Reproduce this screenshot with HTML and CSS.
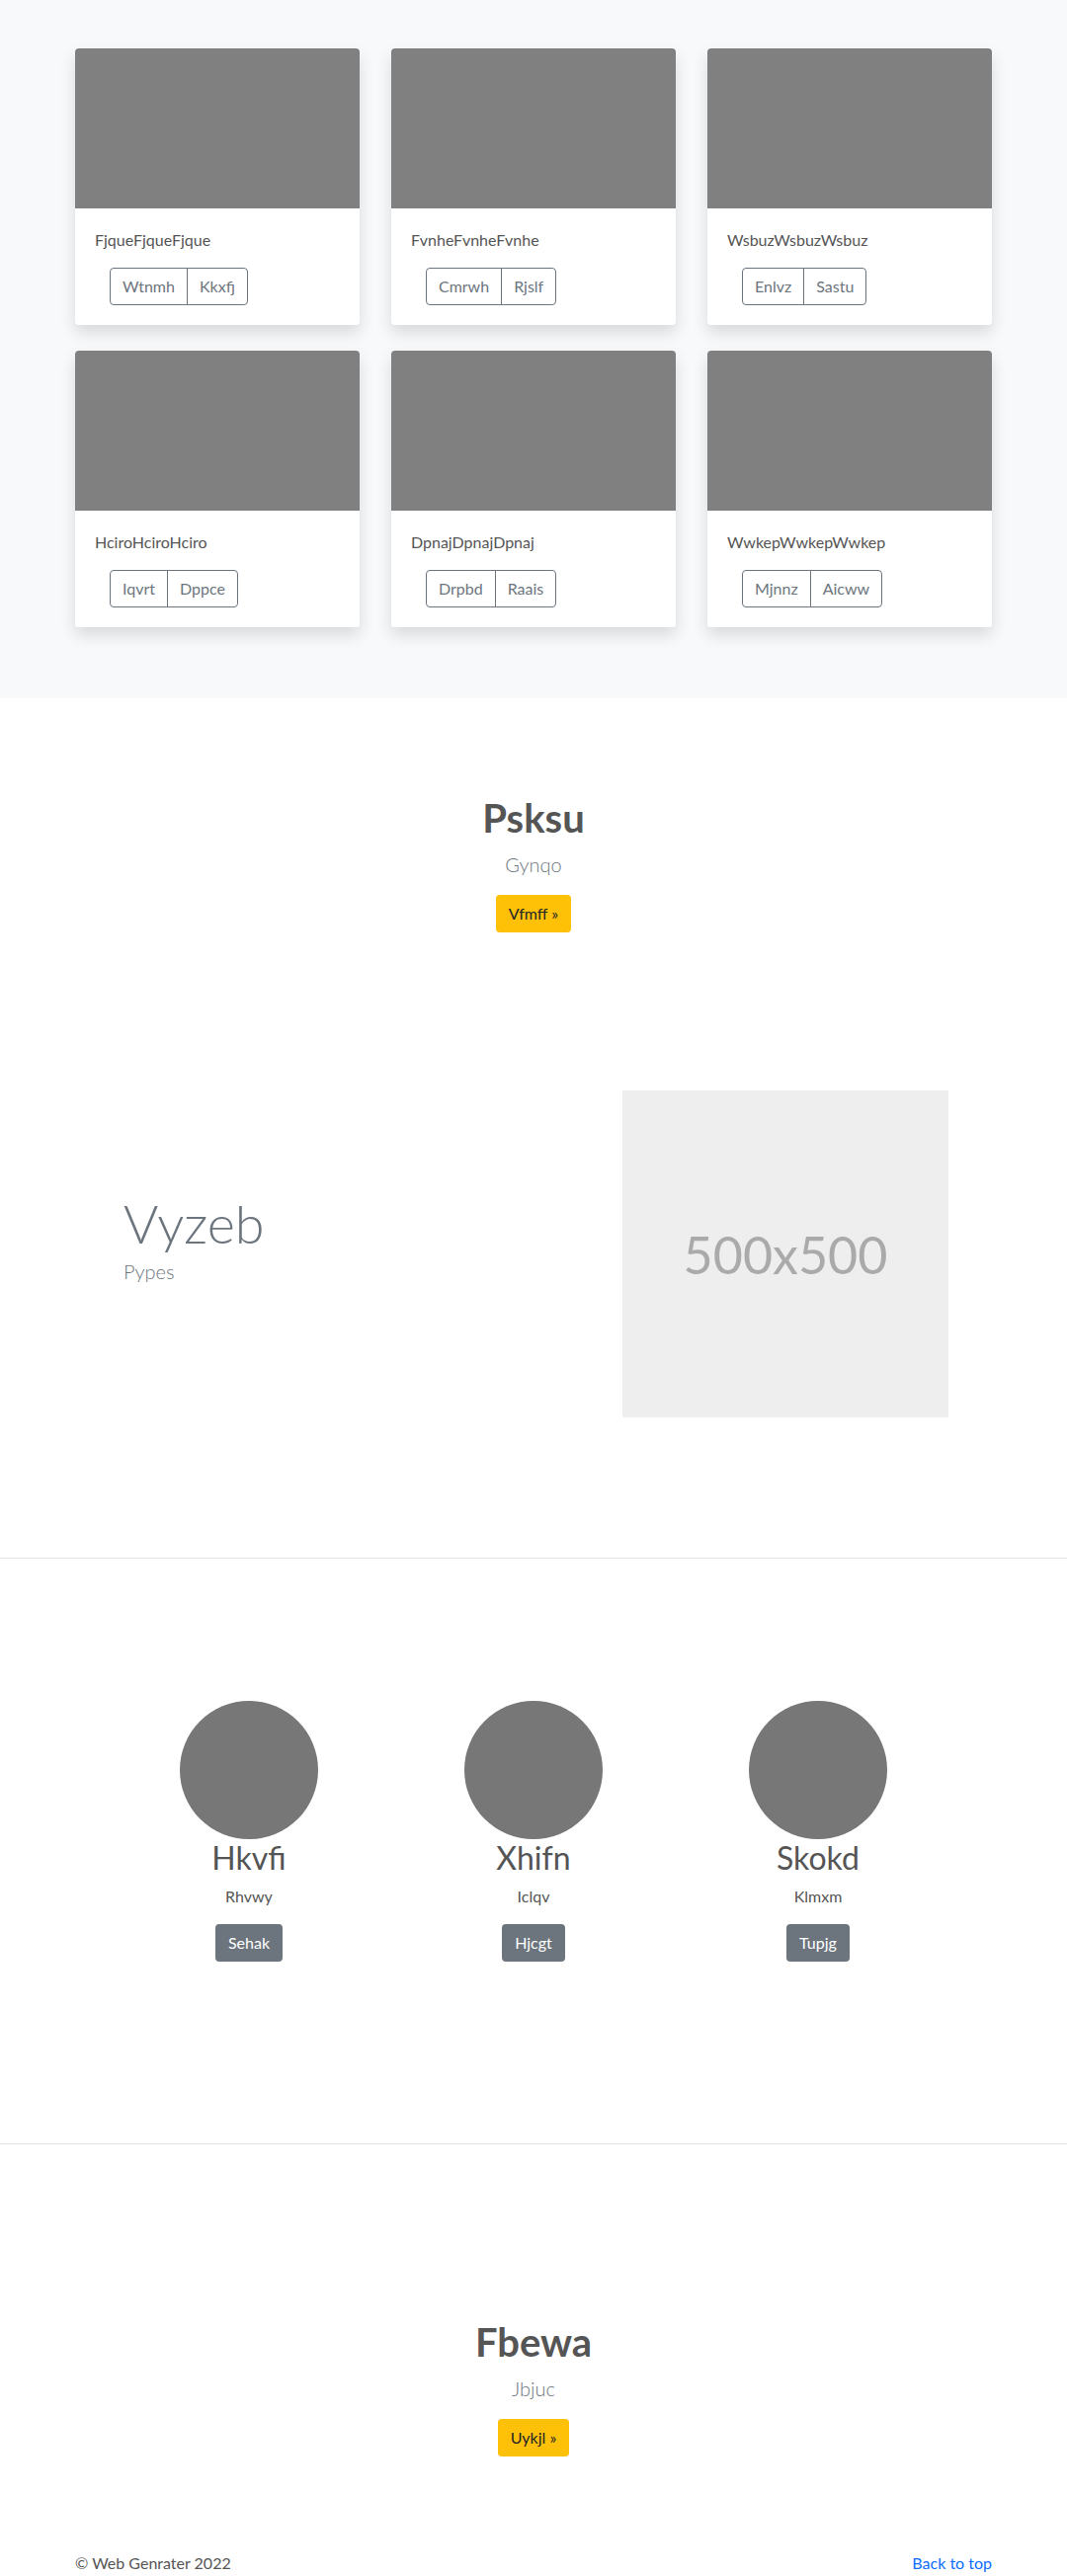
FILE: index.html
```html
<!DOCTYPE html>
<html lang="en">
<head>
<meta charset="utf-8">
<title>Web Genrater</title>
<link rel="stylesheet" href="styles.css">
</head>
<body>
<main>
  <section class="album">
    <div class="card-grid">
      <div class="card">
        <div class="card-img"></div>
        <div class="card-body">
          <p class="card-text">FjqueFjqueFjque</p>
          <div class="btn-group"><button class="btn-outline">Wtnmh</button><button class="btn-outline">Kkxfj</button></div>
        </div>
      </div>
      <div class="card">
        <div class="card-img"></div>
        <div class="card-body">
          <p class="card-text">FvnheFvnheFvnhe</p>
          <div class="btn-group"><button class="btn-outline">Cmrwh</button><button class="btn-outline">Rjslf</button></div>
        </div>
      </div>
      <div class="card">
        <div class="card-img"></div>
        <div class="card-body">
          <p class="card-text">WsbuzWsbuzWsbuz</p>
          <div class="btn-group"><button class="btn-outline">Enlvz</button><button class="btn-outline">Sastu</button></div>
        </div>
      </div>
      <div class="card">
        <div class="card-img"></div>
        <div class="card-body">
          <p class="card-text">HciroHciroHciro</p>
          <div class="btn-group"><button class="btn-outline">Iqvrt</button><button class="btn-outline">Dppce</button></div>
        </div>
      </div>
      <div class="card">
        <div class="card-img"></div>
        <div class="card-body">
          <p class="card-text">DpnajDpnajDpnaj</p>
          <div class="btn-group"><button class="btn-outline">Drpbd</button><button class="btn-outline">Raais</button></div>
        </div>
      </div>
      <div class="card">
        <div class="card-img"></div>
        <div class="card-body">
          <p class="card-text">WwkepWwkepWwkep</p>
          <div class="btn-group"><button class="btn-outline">Mjnnz</button><button class="btn-outline">Aicww</button></div>
        </div>
      </div>
    </div>
  </section>

  <section class="hero hero-top">
    <h1 class="hero-title">Psksu</h1>
    <p class="lead">Gynqo</p>
    <a class="btn-warning" href="#">Vfmff »</a>
  </section>

  <section class="feature">
    <div class="feature-row">
      <div class="feature-text">
        <h2 class="display">Vyzeb</h2>
        <p class="lead lead-left">Pypes</p>
      </div>
      <div class="placeholder">500x500</div>
    </div>
  </section>

  <hr class="divider">

  <section class="team">
    <div class="team-grid">
      <div class="member">
        <div class="avatar"></div>
        <h2 class="member-name">Hkvfi</h2>
        <p class="member-role">Rhvwy</p>
        <a class="btn-secondary" href="#">Sehak</a>
      </div>
      <div class="member">
        <div class="avatar"></div>
        <h2 class="member-name">Xhifn</h2>
        <p class="member-role">Iclqv</p>
        <a class="btn-secondary" href="#">Hjcgt</a>
      </div>
      <div class="member">
        <div class="avatar"></div>
        <h2 class="member-name">Skokd</h2>
        <p class="member-role">Klmxm</p>
        <a class="btn-secondary" href="#">Tupjg</a>
      </div>
    </div>
  </section>

  <hr class="divider">

  <section class="hero hero-bottom">
    <h1 class="hero-title">Fbewa</h1>
    <p class="lead">Jbjuc</p>
    <a class="btn-warning" href="#">Uykjl »</a>
  </section>
</main>

<footer class="footer">
  <p class="copy">© Web Genrater 2022</p>
  <a class="back" href="#">Back to top</a>
</footer>
</body>
</html>
```

FILE: styles.css
```css
* { box-sizing: border-box; }

html, body {
  margin: 0;
  padding: 0;
}

body {
  font-family: Lato, "Open Sans", "Liberation Sans", sans-serif;
  font-size: 16px;
  line-height: 1.5;
  color: #555;
  background: #fff;
  overflow: hidden;
}

p { margin: 0; }
h1, h2 { margin: 0; }

/* ---------- album ---------- */
.album {
  background: #f8f9fa;
  padding: 49px 0 72px;
}

.card-grid {
  width: 928px;
  margin: 0 auto;
  display: grid;
  grid-template-columns: repeat(3, 288px);
  column-gap: 32px;
  row-gap: 26px;
}

.card {
  background: #fff;
  border-radius: 4px;
  box-shadow: 0 8px 16px rgba(0, 0, 0, 0.13);
  overflow: hidden;
  height: 280px;
}

.card-img {
  height: 162px;
  background: #808080;
}

.card-body {
  padding: 20px;
}

.card-text {
  font-size: 16px;
  line-height: 24px;
  color: #555;
  margin-bottom: 16px;
}

.btn-group {
  display: inline-flex;
  margin-left: 15px;
}

.btn-outline {
  font-family: inherit;
  font-size: 16px;
  line-height: 24px;
  padding: 6px 12px;
  background: #fff;
  color: #6c757d;
  border: 1px solid #6c757d;
  border-radius: 0;
}

.btn-outline:first-child {
  border-radius: 4px 0 0 4px;
}

.btn-outline:last-child {
  border-radius: 0 4px 4px 0;
  margin-left: -1px;
}

/* ---------- hero ---------- */
.hero {
  text-align: center;
}

.hero-top {
  padding-top: 97px;
}

.hero-bottom {
  padding-top: 176px;
}

.hero-title {
  font-size: 40px;
  line-height: 48px;
  font-weight: 700;
  color: #555;
  margin-bottom: 8px;
}

.lead {
  font-size: 20px;
  line-height: 30px;
  font-weight: 300;
  color: #6c757d;
  margin-bottom: 16px;
}

.btn-warning {
  display: inline-block;
  font-size: 16px;
  line-height: 24px;
  padding: 7px 13px;
  background: #ffc107;
  color: #212529;
  border-radius: 4px;
  text-decoration: none;
}

/* ---------- feature ---------- */
.feature {
  padding: 160px 0 142px;
}

.feature-row {
  width: 960px;
  margin: 0 auto;
  padding: 0 60px 0 65px;
  display: grid;
  grid-template-columns: 1fr 330px;
  align-items: center;
}

.display {
  font-size: 54px;
  line-height: 66px;
  font-weight: 300;
  color: #6c757d;
  margin: 0;
}

.lead-left {
  margin-bottom: 32px;
}

.placeholder {
  width: 330px;
  height: 331px;
  background: #eee;
  color: #aaa;
  font-size: 52px;
  font-weight: 400;
  display: flex;
  align-items: center;
  justify-content: center;
}

/* ---------- dividers ---------- */
.divider {
  margin: 0;
  border: 0;
  border-top: 1px solid #e3e3e3;
  height: 0;
}

/* ---------- team ---------- */
.team {
  padding: 144px 0 184px;
}

.team-grid {
  width: 864px;
  margin: 0 auto;
  display: grid;
  grid-template-columns: repeat(3, 288px);
  text-align: center;
}

.avatar {
  width: 140px;
  height: 140px;
  border-radius: 50%;
  background: #777;
  margin: 0 auto;
}

.member-name {
  font-size: 32px;
  line-height: 38px;
  font-weight: 400;
  color: #555;
  margin-bottom: 8px;
}

.member-role {
  font-size: 16px;
  line-height: 24px;
  color: #555;
  margin-bottom: 16px;
}

.btn-secondary {
  display: inline-block;
  font-size: 16px;
  line-height: 24px;
  padding: 7px 13px;
  background: #6c757d;
  color: #fff;
  border-radius: 4px;
  text-decoration: none;
}

/* ---------- footer ---------- */
.footer {
  width: 928px;
  margin: 0 auto;
  padding-top: 96px;
  display: flex;
  justify-content: space-between;
  font-size: 16px;
  line-height: 24px;
}

.copy {
  color: #555;
}

.back {
  color: #0d6efd;
  text-decoration: none;
}
```
